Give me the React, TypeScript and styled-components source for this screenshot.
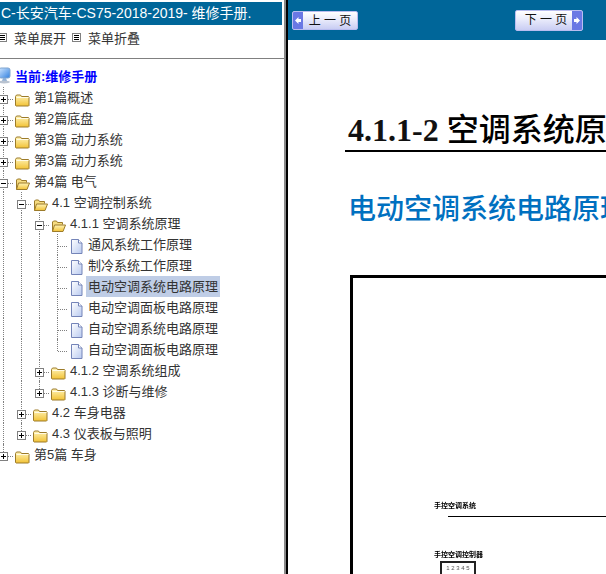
import React from "react";
import styled, { createGlobalStyle } from "styled-components";

const GlobalStyle = createGlobalStyle`
  html, body {
    margin: 0;
    padding: 0;
    height: 100%;
    overflow: hidden;
    background: #fff;
  }
  #root {
    height: 100%;
  }
`;

const cjk = `"Liberation Sans", "Noto Sans CJK SC", sans-serif`;

const Frame = styled.div`
  display: grid;
  grid-template-columns: 284px 4px 1fr;
  height: 574px;
  overflow: hidden;
  font-family: ${cjk};
`;

const Sidebar = styled.div`
  overflow: hidden;
  padding-top: 2px;
`;

const SideTitle = styled.div`
  width: 282px;
  height: 23px;
  line-height: 23px;
  padding-left: 1px;
  box-sizing: border-box;
  background: #006699;
  color: #fff;
  font-size: 14px;
  white-space: nowrap;
  overflow: hidden;
`;

const MenuBar = styled.div`
  display: flex;
  align-items: center;
  height: 34px;
  padding-bottom: 8px;
  box-sizing: border-box;
  border-bottom: 1px solid #808080;
  margin-left: -2px;
  font-size: 13px;
  color: #333;
`;

const MenuItem = styled.span`
  display: flex;
  align-items: center;
  gap: 7px;
  margin-right: 6px;
`;

const RootRow = styled.div`
  display: flex;
  align-items: center;
  height: 21px;
  margin-top: 6px;
  margin-bottom: 1px;
  margin-left: -3px;
  gap: 4px;
  color: #0000ff;
  font-size: 13px;
  font-weight: bold;
`;

const Tree = styled.div`
  margin-left: -5px;
`;

const Row = styled.div`
  display: flex;
  align-items: stretch;
  height: 21px;
`;

const Cell = styled.span<{ $line?: boolean; $branch?: boolean; $half?: boolean }>`
  position: relative;
  flex: 0 0 18px;
  display: flex;
  align-items: center;
  justify-content: center;
  ${(p) =>
    p.$line &&
    `&::before {
      content: "";
      position: absolute;
      left: 8px;
      top: 0;
      bottom: ${p.$half ? "9px" : "0"};
      border-left: 1px dotted #808080;
    }`}
  ${(p) =>
    p.$branch &&
    `&::after {
      content: "";
      position: absolute;
      left: 9px;
      right: 0;
      top: 12px;
      border-top: 1px dotted #808080;
    }`}
`;

const IconCell = styled.span`
  flex: 0 0 18px;
  display: flex;
  align-items: center;
  justify-content: center;
`;

const Label = styled.span<{ $active?: boolean }>`
  margin-left: ${(p) => (p.$active ? "1px" : "3px")};
  padding: 0 ${(p) => (p.$active ? "2px" : "0")};
  line-height: 21px;
  font-size: 13px;
  color: #333;
  white-space: nowrap;
  background: ${(p) => (p.$active ? "#bfcde6" : "transparent")};
`;

const Splitter = styled.div`
  background: linear-gradient(to right, #8a8a8a 0 2px, #000 2px 4px);
`;

const Content = styled.div`
  overflow: hidden;
  min-width: 0;
`;

const TopBar = styled.div`
  display: flex;
  justify-content: space-between;
  align-items: center;
  height: 40px;
  background: #006699;
  padding: 0 23px 0 4px;
`;

const PageButton = styled.div<{ $next?: boolean }>`
  display: flex;
  flex-direction: ${(p) => (p.$next ? "row-reverse" : "row")};
  width: ${(p) => (p.$next ? "68px" : "66px")};
  height: ${(p) => (p.$next ? "21px" : "19px")};
  box-sizing: border-box;
  border: 1px solid #b9bdf0;
  border-radius: 2px;
  background: linear-gradient(to bottom, #fff 0%, #e9ebfb 45%, #c9cdf3 100%);
  overflow: hidden;
`;

const ArrowTab = styled.span`
  flex: 0 0 10px;
  display: flex;
  align-items: center;
  justify-content: center;
  background: #6a78e4;
`;

const ButtonText = styled.span<{ $next?: boolean }>`
  flex: 1;
  padding-left: ${(p) => (p.$next ? "4px" : "0")};
  text-align: center;
  font-size: 12px;
  line-height: 18px;
  color: #111;
  white-space: pre;
`;

const Page = styled.div`
  padding: 65px 0 0 57px;
  width: 420px;
`;

const Title = styled.h1`
  margin: 0 -60px 0 0;
  padding-left: 3px;
  height: 45px;
  line-height: 45px;
  border-bottom: 2px solid #000;
  font-family: "Liberation Serif", serif;
  font-size: 32px;
  font-weight: bold;
  color: #111;
  white-space: nowrap;
`;

const TitleCjk = styled.span`
  font-family: "Noto Sans CJK SC", serif;
  font-weight: 500;
  color: #000;
`;

const Heading = styled.h2`
  margin: 37px 0 0 3px;
  height: 42px;
  line-height: 42px;
  font-size: 28px;
  font-weight: 500;
  color: #0070c0;
  white-space: nowrap;
`;

const Diagram = styled.div`
  margin: 44px 0 0 5px;
  height: 400px;
  border: 3px solid #000;
  border-right: 0;
  padding: 223px 0 0 81px;
  box-sizing: border-box;
`;

const Caption = styled.div<{ $gap?: number }>`
  margin-top: ${(p) => p.$gap ?? 0}px;
  font-size: 7px;
  line-height: 9px;
  font-weight: bold;
  color: #000;
  filter: blur(0.5px);
  white-space: nowrap;
`;

const Wire = styled.div`
  height: 1px;
  background: #000;
  margin: 6px 0 0 14px;
`;

const Connector = styled.div`
  width: 36px;
  height: 20px;
  border: 2px solid #222;
  margin: 2px 0 0 6px;
  box-sizing: border-box;
  font-size: 6px;
  line-height: 10px;
  text-align: center;
  color: #555;
  filter: blur(0.3px);
`;

const BoxSvg = styled.svg`
  position: relative;
  z-index: 1;
  margin: 3px 1px 0 0;
`;

const FolderSvg = styled.svg`
  margin-top: 4px;
`;

const DocSvg = styled.svg`
  margin-top: 4px;
`;

const PlusBox = ({ open }: { open?: boolean }) => (
  <BoxSvg width="9" height="9" viewBox="0 0 9 9">
    <rect x="0.5" y="0.5" width="8" height="8" fill="#fff" stroke="#808080" />
    <path d={open ? "M2 4.5h5" : "M2 4.5h5M4.5 2v5"} stroke="#000" />
  </BoxSvg>
);

const FolderIcon = ({ open }: { open?: boolean }) => (
  <FolderSvg width="15" height="14" viewBox="0 0 15 14">
    <defs>
      <linearGradient id="fold" x1="0" y1="0" x2="0" y2="1">
        <stop offset="0" stopColor="#fff4b8" />
        <stop offset="1" stopColor="#f2c235" />
      </linearGradient>
    </defs>
    {open ? (
      <>
        <path d="M1.5 12.5V3l1-1h3l1 1.5h5v2" fill="#f6dc80" stroke="#9c7b2a" />
        <path d="M1.5 12.5l2-6.5h11l-2.5 6.5z" fill="url(#fold)" stroke="#9c7b2a" />
      </>
    ) : (
      <>
        <path d="M.5 3.5l1-1.5h4l1 1.5h7l.5.5v8.5l-.5.5H1l-.5-.5z" fill="url(#fold)" stroke="#9c7b2a" />
        <path d="M1.5 4.5h12" stroke="#fffbe6" />
      </>
    )}
  </FolderSvg>
);

const DocIcon = () => (
  <DocSvg width="13" height="15" viewBox="0 0 13 15">
    <defs>
      <linearGradient id="doc" x1="0" y1="0" x2="1" y2="1">
        <stop offset="0" stopColor="#fff" />
        <stop offset="1" stopColor="#b9caf0" />
      </linearGradient>
    </defs>
    <path d="M1.5 .5h7l3.5 3.5v10.5H1.5z" fill="url(#doc)" stroke="#7484b8" />
    <path d="M8.5 .5v3.5H12" fill="#fff" stroke="#7484b8" />
  </DocSvg>
);

const ComputerIcon = () => (
  <svg width="14" height="17" viewBox="0 0 14 17">
    <defs>
      <linearGradient id="screen" x1="0" y1="0" x2="1" y2="1">
        <stop offset="0" stopColor="#cfe6ff" />
        <stop offset="1" stopColor="#2f7fe0" />
      </linearGradient>
    </defs>
    <rect x="2" y="1" width="11" height="10" rx="2" fill="url(#screen)" stroke="#7fa4cf" />
    <path d="M6 11l-1 3h5l-1-3z" fill="#8fb0d6" />
    <ellipse cx="7" cy="15" rx="6" ry="1.5" fill="#b9c3d0" />
  </svg>
);

const MenuGlyph = () => (
  <svg width="9" height="9" viewBox="0 0 9 9">
    <rect x="0.5" y="0.5" width="8" height="8" fill="#fff" stroke="#808080" />
    <path d="M2 2.5h5M2 4.5h5M2 6.5h5" stroke="#000" />
  </svg>
);

const ArrowGlyph = ({ right }: { right?: boolean }) => (
  <svg width="8" height="9" viewBox="0 0 8 9">
    <path d={right ? "M1 3h2.5V1L7 4.5 3.5 8V6H1z" : "M7 3H4.5V1L1 4.5 4.5 8V6H7z"} fill="#fff" />
  </svg>
);

type TreeNode = {
  label: string;
  kind: "closed" | "open" | "doc";
  depth: number;
  last?: boolean;
  active?: boolean;
};

const nodes: TreeNode[] = [
  { label: "第1篇概述", kind: "closed", depth: 0 },
  { label: "第2篇底盘", kind: "closed", depth: 0 },
  { label: "第3篇 动力系统", kind: "closed", depth: 0 },
  { label: "第3篇 动力系统", kind: "closed", depth: 0 },
  { label: "第4篇 电气", kind: "open", depth: 0 },
  { label: "4.1 空调控制系统", kind: "open", depth: 1 },
  { label: "4.1.1 空调系统原理", kind: "open", depth: 2 },
  { label: "通风系统工作原理", kind: "doc", depth: 3 },
  { label: "制冷系统工作原理", kind: "doc", depth: 3 },
  { label: "电动空调系统电路原理", kind: "doc", depth: 3, active: true },
  { label: "电动空调面板电路原理", kind: "doc", depth: 3 },
  { label: "自动空调系统电路原理", kind: "doc", depth: 3 },
  { label: "自动空调面板电路原理", kind: "doc", depth: 3, last: true },
  { label: "4.1.2 空调系统组成", kind: "closed", depth: 2 },
  { label: "4.1.3 诊断与维修", kind: "closed", depth: 2, last: true },
  { label: "4.2 车身电器", kind: "closed", depth: 1 },
  { label: "4.3 仪表板与照明", kind: "closed", depth: 1, last: true },
  { label: "第5篇 车身", kind: "closed", depth: 0, last: true },
];

const TreeRow = ({ node }: { node: TreeNode }) => (
  <Row>
    {Array.from({ length: node.depth }).map((_, i) => (
      <Cell key={i} $line />
    ))}
    <Cell $line $branch $half={node.last}>
      {node.kind !== "doc" && <PlusBox open={node.kind === "open"} />}
    </Cell>
    <IconCell>{node.kind === "doc" ? <DocIcon /> : <FolderIcon open={node.kind === "open"} />}</IconCell>
    <Label $active={node.active}>{node.label}</Label>
  </Row>
);

export default function App() {
  return (
    <>
      <GlobalStyle />
      <Frame>
        <Sidebar>
          <SideTitle>C-长安汽车-CS75-2018-2019- 维修手册.</SideTitle>
          <MenuBar>
            <MenuItem>
              <MenuGlyph />
              菜单展开
            </MenuItem>
            <MenuItem>
              <MenuGlyph />
              菜单折叠
            </MenuItem>
          </MenuBar>
          <RootRow>
            <ComputerIcon />
            当前:维修手册
          </RootRow>
          <Tree>
            {nodes.map((n, i) => (
              <TreeRow key={i} node={n} />
            ))}
          </Tree>
        </Sidebar>
        <Splitter />
        <Content>
          <TopBar>
            <PageButton>
              <ArrowTab>
                <ArrowGlyph />
              </ArrowTab>
              <ButtonText>上 一 页</ButtonText>
            </PageButton>
            <PageButton $next>
              <ArrowTab>
                <ArrowGlyph right />
              </ArrowTab>
              <ButtonText $next>下 一 页</ButtonText>
            </PageButton>
          </TopBar>
          <Page>
            <Title>
              4.1.1-2 <TitleCjk>空调系统原理</TitleCjk>
            </Title>
            <Heading>电动空调系统电路原理</Heading>
            <Diagram>
              <Caption>手控空调系统</Caption>
              <Wire />
              <Caption $gap={33}>手控空调控制器</Caption>
              <Connector>1 2 3 4 5</Connector>
            </Diagram>
          </Page>
        </Content>
      </Frame>
    </>
  );
}
